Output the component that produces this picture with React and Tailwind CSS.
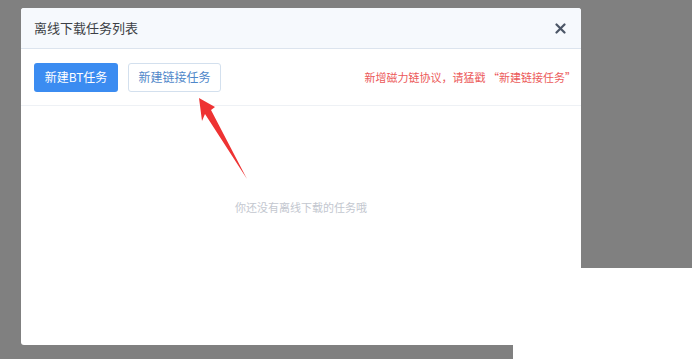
export default function App() {
  return (
    <div
      className="relative w-[692px] h-[359px] overflow-hidden bg-[#808080] pt-[8px] pl-[21px]"
      style={{ fontFamily: '"Noto Sans CJK SC", "Noto Sans", sans-serif' }}
    >
      <div className="absolute left-[513px] top-[268px] right-0 bottom-0 bg-white" />

      <div className="relative flex flex-col w-[560px] h-[337px] bg-white rounded-[3px] overflow-hidden">
        <div className="flex items-center justify-between h-[41px] px-[13px] bg-[#f6f9fd] border-b border-[#dce4ee]">
          <span className="text-[13px] text-[#3c3f45]">离线下载任务列表</span>
          <svg width="11" height="11" viewBox="0 0 11 11" className="mr-[2px] mt-[1px]">
            <path d="M1.5 1.5 L9.5 9.5 M9.5 1.5 L1.5 9.5" stroke="#4b5566" strokeWidth="2.2" strokeLinecap="round" />
          </svg>
        </div>

        <div className="flex items-center justify-between h-[57px] px-[13px] border-b border-[#eef1f5]">
          <div className="flex items-center gap-[10px]">
            <button className="h-[29px] w-[84px] rounded-[3px] bg-[#3b8cf1] text-white text-[12px]">
              新建BT任务
            </button>
            <button className="h-[29px] w-[93px] rounded-[3px] border border-[#d3e0ee] bg-white text-[#4f87c9] text-[12px]">
              新建链接任务
            </button>
          </div>
          <span className="text-[11px] text-[#ec5a5a] mr-[-8px]">
            新增磁力链协议，请猛戳 “新建链接任务”
          </span>
        </div>

        <div className="flex-1 flex justify-center pt-[93px]">
          <span className="text-[11px] text-[#c3c7cf]">你还没有离线下载的任务哦</span>
        </div>

        <svg
          className="absolute left-0 top-0"
          width="560"
          height="337"
          viewBox="0 0 560 337"
        >
          <polygon
            points="178,90 194,99 190,102 226,171 184,106 181,113"
            fill="#ee3333"
          />
        </svg>
      </div>
    </div>
  );
}
